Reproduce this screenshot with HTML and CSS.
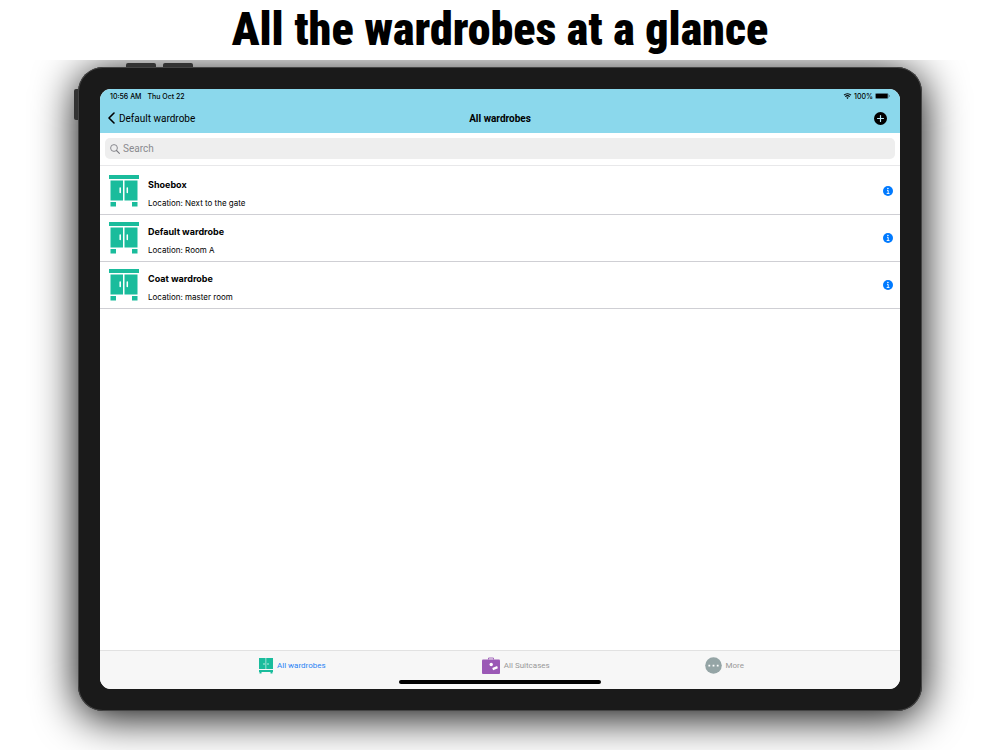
FILE: index.html
```html
<!DOCTYPE html>
<html lang="en">
<head>
  <meta charset="UTF-8">
  <meta name="viewport" content="width=device-width, initial-scale=1.0">
  <title>All the wardrobes at a glance</title>
  <link rel="stylesheet" href="styles.css">
</head>
<body>
  <!-- shared icons -->
  <svg class="sprite" aria-hidden="true">
    <symbol id="wardrobe" viewBox="0 0 30 32">
      <path d="M0 0h30v4H0zM1.500 5.500h12.500v20H1.500zM15.500 5.500h13v20h-13zM1.500 27h5.500v4.500h-5.500zM23 27h5.500v4.500H23z" fill="#1abc9c"/>
      <path d="M11.200 13v4.500M18.300 13v4.500" stroke="#fff" stroke-width="1.500" stroke-linecap="round"/>
    </symbol>
    <symbol id="info" viewBox="0 0 10 10">
      <circle cx="5" cy="5" r="5" fill="#007aff"/>
      <circle cx="4.900" cy="2.500" r=".8" fill="#fff"/>
      <path d="M4 4.400h1.200v3M3.700 7.500h2.800" fill="none" stroke="#fff" stroke-width=".9"/>
    </symbol>
  </svg>

  <h1 class="headline">All the wardrobes at a glance</h1>

  <div class="stage">
    <div class="device">
      <span class="key volume-up"></span>
      <span class="key volume-down"></span>
      <span class="key power"></span>

      <div class="screen">
        <header class="top">
          <div class="status">
            <span>10:56 AM</span>
            <span>Thu Oct 22</span>
            <span class="status-right">
              <svg width="9" height="6" viewBox="0 0 8 6"><path d="M.5 2.200a5 5 0 0 1 7 0M1.800 3.600a3.200 3.200 0 0 1 4.400 0" fill="none" stroke="#000" stroke-width="1.100"/><path d="M2.800 4.700a1.800 1.800 0 0 1 2.400 0L4 6z"/></svg>
              <span>100%</span>
              <svg width="15" height="6" viewBox="0 0 15 6"><rect x=".3" y=".3" width="12.900" height="5.400" rx="1.400" fill="none" stroke="#345" stroke-width=".5"/><rect x=".8" y=".8" width="11.900" height="4.400" rx=".8"/><path d="M14 2v2q.8-.4.8-1T14 2z" fill="#456"/></svg>
            </span>
          </div>
          <nav class="navbar">
            <button class="back" type="button">
              <svg width="7" height="12" viewBox="0 0 7 12"><path d="M6 1L1 6l5 5" fill="none" stroke="#000" stroke-width="1.600" stroke-linecap="round" stroke-linejoin="round"/></svg>
              Default wardrobe
            </button>
            <h2 class="title">All wardrobes</h2>
            <button class="add" type="button" aria-label="Add wardrobe">
              <svg width="13" height="13" viewBox="0 0 13 13"><circle cx="6.500" cy="6.500" r="6.500"/><path d="M6.500 3.500v6M3.500 6.500h6" stroke="#b9ebf8" stroke-width="1.200" stroke-linecap="round"/></svg>
            </button>
          </nav>
        </header>

        <div class="search">
          <label class="search-box">
            <svg width="10" height="10" viewBox="0 0 10 10"><circle cx="4" cy="4" r="3.400" fill="none" stroke="#7f7f84" stroke-width=".9"/><path d="M6.500 6.500L9.400 9.400" stroke="#7f7f84" stroke-width="1.100" stroke-linecap="round"/></svg>
            <input type="search" placeholder="Search" aria-label="Search">
          </label>
        </div>

        <ul class="list">
          <li class="row">
            <svg class="row-icon"><use href="#wardrobe"/></svg>
            <div class="row-text">
              <h3>Shoebox</h3>
              <p>Location: Next to the gate</p>
            </div>
            <button class="info" type="button" aria-label="Shoebox details"><svg width="10" height="10"><use href="#info"/></svg></button>
          </li>
          <li class="row">
            <svg class="row-icon"><use href="#wardrobe"/></svg>
            <div class="row-text">
              <h3>Default wardrobe</h3>
              <p>Location: Room A</p>
            </div>
            <button class="info" type="button" aria-label="Default wardrobe details"><svg width="10" height="10"><use href="#info"/></svg></button>
          </li>
          <li class="row">
            <svg class="row-icon"><use href="#wardrobe"/></svg>
            <div class="row-text">
              <h3>Coat wardrobe</h3>
              <p>Location: master room</p>
            </div>
            <button class="info" type="button" aria-label="Coat wardrobe details"><svg width="10" height="10"><use href="#info"/></svg></button>
          </li>
        </ul>

        <nav class="tabs">
          <a class="tab active" href="#wardrobes">
            <svg width="14" height="16" viewBox="0 0 14 16"><path d="M0 0h6.600v11H0zM7.200 0H14v11H7.200zM0 12h14v2H0zM.5 14h2v1.500h-2zM11.500 14h2v1.500h-2z" fill="#1abc9c"/><path d="M5 5v2M9 5v2" stroke="#c9f3e9" stroke-width=".9"/></svg>
            All wardrobes
          </a>
          <a class="tab" href="#suitcases">
            <svg width="18" height="17" viewBox="0 0 18 17"><path d="M6.500 2.500V1h5v1.500" fill="none" stroke="#9b59b6" stroke-width=".9"/><rect y="2.500" width="18" height="14.500" rx="1" fill="#9b59b6"/><circle cx="9.200" cy="7.500" r="1.700" fill="#fff"/><path d="M10.300 10.900l4.800-1.900.8 2.300-4.800 1.900z" fill="#fff"/></svg>
            All Suitcases
          </a>
          <a class="tab" href="#more">
            <svg width="17" height="17" viewBox="0 0 17 17"><circle cx="8.500" cy="8.500" r="8.300" fill="#95a5a6"/><path d="M3.400 7.700h1.800v1.800H3.400zM7.600 7.700h1.800v1.800H7.600zM11.800 7.700h1.800v1.800h-1.800z" fill="#fff"/></svg>
            More
          </a>
        </nav>
        <span class="home-bar"></span>
      </div>
    </div>
  </div>
</body>
</html>
```
FILE: styles.css
```css
* {
  box-sizing: border-box;
}
body {
  display: flex;
  flex-direction: column;
  height: 100vh;
  margin: 0;
  background: #fff;
  color: #000;
  font-family: Inter, "Liberation Sans", sans-serif;
}
h1, h2, h3, p, ul {
  margin: 0;
  padding: 0;
}
button {
  display: flex;
  align-items: center;
  padding: 0;
  border: none;
  background: none;
  color: inherit;
  font: inherit;
  cursor: pointer;
}
svg {
  display: block;
  flex: none;
}
.sprite {
  position: absolute;
  width: 0;
  height: 0;
}
.headline {
  height: 60px;
  font: 900 46px/58px "Roboto Condensed", Roboto, sans-serif;
  text-align: center;
  white-space: nowrap;
}

/* tablet */
.stage {
  flex: 1;
  display: flex;
  min-height: 0;
  padding: 7px 78px 39px;
  overflow: hidden;
}
.device {
  position: relative;
  flex: 1;
  display: flex;
  min-width: 0;
  padding: 22px;
  border-radius: 25px;
  background: #1a1a1a;
  box-shadow: inset 0 0 0 1px #444, 0 6px 44px #000;
}
.key {
  position: absolute;
  background: #333;
}
.volume-up, .volume-down {
  top: -4px;
  width: 30px;
  height: 4px;
  border-radius: 2px 2px 0 0;
}
.volume-up {
  left: 48px;
}
.volume-down {
  left: 85px;
}
.power {
  top: 22px;
  left: -4px;
  width: 4px;
  height: 31px;
  border-radius: 2px 0 0 2px;
}
.screen {
  position: relative;
  flex: 1;
  display: flex;
  flex-direction: column;
  min-width: 0;
  border-radius: 11px;
  background: #fff;
  overflow: hidden;
}

/* status and nav bars */
.top {
  background: #8bd8ec;
}
.status {
  display: flex;
  align-items: center;
  gap: 6px;
  height: 14px;
  padding: 0 10px;
  font-size: 7px;
  font-weight: 500;
}
.status-right {
  display: flex;
  align-items: center;
  gap: 2px;
  margin-left: auto;
}
.navbar {
  display: grid;
  grid-template-columns: 1fr auto 1fr;
  align-items: center;
  height: 30px;
  padding: 0 8px;
  font: 10px Roboto, sans-serif;
}
.back {
  gap: 4px;
}
.title {
  font-size: 10px;
  font-weight: 700;
}
.add {
  justify-self: end;
  padding-right: 5px;
}

/* search */
.search {
  padding: 5px 5px 6px;
  border-bottom: 1px solid #e8e8ea;
}
.search-box {
  display: flex;
  align-items: center;
  gap: 3px;
  height: 21px;
  padding: 0 5px;
  border-radius: 5px;
  background: #eee;
}
.search-box input {
  flex: 1;
  padding: 0;
  border: none;
  outline: none;
  background: none;
  font: 10px Roboto, sans-serif;
}
.search-box input::placeholder {
  color: #8a8a8e;
}

/* wardrobes */
.list {
  flex: 1;
  padding-top: 2px;
  list-style: none;
}
.row {
  display: flex;
  align-items: center;
  height: 47px;
  padding: 0 7px 0 9px;
  border-bottom: 1px solid #cfcfd4;
}
.row-icon {
  width: 30px;
  height: 32px;
}
.row-text {
  flex: 1;
  padding: 6px 0 0 9px;
}
.row-text h3 {
  font-size: 9px;
  font-weight: 700;
  line-height: 18px;
}
.row-text p {
  font-size: 8px;
  line-height: 18px;
}

/* tab bar */
.tabs {
  display: grid;
  grid-template-columns: 1fr 1fr auto;
  height: 39px;
  padding: 6px 156px 0 159px;
  border-top: 1px solid #e2e2e2;
  background: #f7f7f7;
}
.tab {
  display: flex;
  align-items: center;
  gap: 4px;
  height: 17px;
  color: #999;
  font: 8px Roboto, sans-serif;
  text-decoration: none;
}
.tab.active {
  color: #2a84f5;
}
.home-bar {
  position: absolute;
  bottom: 5px;
  left: 50%;
  width: 202px;
  height: 4px;
  margin-left: -101px;
  border-radius: 2px;
  background: #000;
}
```
